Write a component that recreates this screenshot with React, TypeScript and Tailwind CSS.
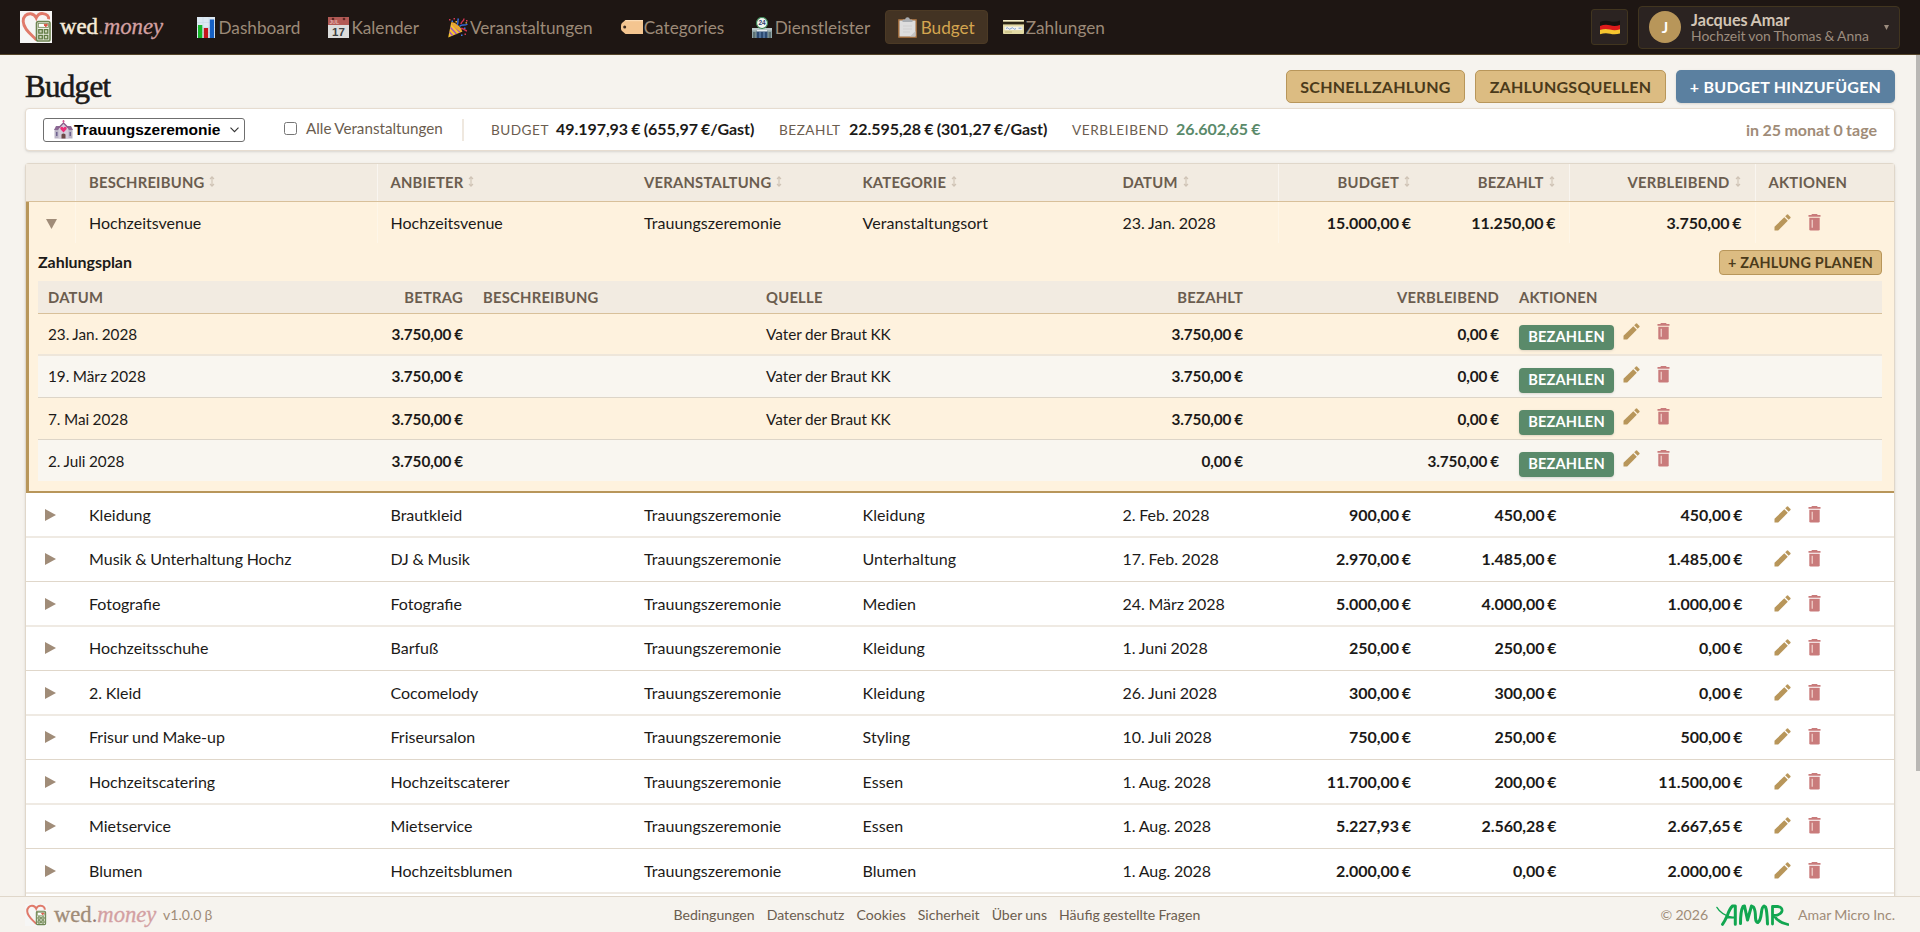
import type { ReactNode } from "react";

/* ---------- drawings ---------- */

function LogoMark({ className }: { className: string }) {
  return (
    <svg className={className} viewBox="0 0 32 32">
      <rect width="32" height="32" fill="#f6f6f5" />
      <path d="M16.5 29C12 24 3.5 18.5 3.2 10.5C3 5.500 6.500 2.500 10.500 2.700C13.500 2.900 15.500 5 16.300 6.800C17.500 4 20 2.300 23 2.600C27 3 29.200 5.500 28.600 8.300" fill="none" stroke="#e07a6a" strokeWidth="2.900" />
      <rect x="16.500" y="10.500" width="13.500" height="19.500" rx="1.800" fill="#eef0e6" stroke="#6d8450" strokeWidth="1.600" />
      <rect x="18.300" y="12.300" width="10" height="4" fill="#fff" stroke="#6d8450" strokeWidth=".8" />
      <path d="M25.800 15.800l-1.700-1.800q0-1.300 1.700-.6q1.700-.7 1.700.6z" fill="#d9513f" stroke="#d9513f" />
      <path d="M18.800 18.700h3.500v3.500h-3.500zM24.300 18.700h3.500v3.500h-3.500zM18.800 24.300h3.500v3.500h-3.500zM24.300 24.300h3.500v3.500h-3.500z" fill="#cdd6ba" stroke="#5f7a42" strokeWidth="1.300" />
    </svg>
  );
}

function ChartIcon() {
  return (
    <svg className="h-[21px] w-[18px]" viewBox="0 0 18 21">
      <rect width="18" height="21" fill="#dde9f3" />
      <path d="M0 5.500h18M0 10.500h18M0 15.500h18M6 0v21M12 0v21" stroke="#c3d5e4" strokeWidth=".5" />
      <rect x="1" y="8" width="4.300" height="13" fill="#16b52a" />
      <rect x="6.800" y="11" width="4.300" height="10" fill="#c5131c" />
      <rect x="12.800" y="2.500" width="4.300" height="18.500" fill="#1660c4" />
    </svg>
  );
}

function CalendarIcon() {
  return (
    <svg className="h-[21px] w-[21px]" viewBox="0 0 21 21">
      <rect width="21" height="21" fill="#dcdcdb" />
      <rect width="21" height="8" fill="#b25a55" />
      <circle cx="5" cy="2" r="1.300" fill="#5c2523" />
      <circle cx="16" cy="2" r="1.300" fill="#5c2523" />
      <text x="1.500" y="7.200" fontSize="5" fontFamily="Liberation Sans, sans-serif" fontWeight="700" fill="#e6b4b0">JUL</text>
      <text x="10.500" y="18.800" textAnchor="middle" fontSize="11.500" fontFamily="Liberation Sans, sans-serif" fontWeight="700" fill="#3f3f3f">17</text>
    </svg>
  );
}

function PartyIcon() {
  return (
    <svg className="h-[21px] w-[21px]" viewBox="0 0 21 21">
      <path d="M1.200 20.500L4.300 5L15.500 14.500z" fill="#f5c331" />
      <path d="M3.500 10.500l6 6.500M2.600 15l3 3.500M5 6.500l8 9" stroke="#9b51c8" strokeWidth="1.300" />
      <ellipse cx="9.800" cy="9.800" rx="2" ry="6.600" transform="rotate(-48 9.800 9.800)" fill="#e8a82f" />
      <path d="M10 8c2-2 0-4 1.500-6.500M12.500 9.500c2.500-3 4.500 0 8-2.500" fill="none" stroke="#3669d6" strokeWidth="1.500" />
      <path d="M14 7c0-3 3-2 3-5.500M14 11.500c2.500-.5 3.500 2 6 2.500" fill="none" stroke="#cf3350" strokeWidth="1.400" />
      <path d="M2 2h1.500v1.500H2zM6.500 1H8v1.500H6.500zM19 3h1.500v1.500H19zM17.500 16.500H19V18h-1.500z" fill="#d23b54" />
      <path d="M4.500 3.500H6V5H4.500zM17 10.500h1.500V12H17zM14 17.500h1.500V19H14z" fill="#3f78dd" />
      <path d="M8.500 4H10v1.500H8.500zM18.500 5.200H20v1.200h-1.500z" fill="#f0b73a" />
    </svg>
  );
}

function LabelIcon() {
  return (
    <svg className="h-[14px] w-[22px]" viewBox="0 0 22 14">
      <path d="M4.500 0H22v14H4.500L1 11Q0 10 0 8.500V5.500Q0 4 1 3z" fill="#f4c590" />
      <path d="M4.500 0H22v1.200H4.500z" fill="#fbdcb5" />
      <circle cx="3.700" cy="7" r="1.500" fill="#3b2a1d" />
    </svg>
  );
}

function StoreIcon() {
  return (
    <svg className="h-[21px] w-[20px]" viewBox="0 0 20 21">
      <rect x="0" y="11" width="20" height="10" fill="#93a7a9" />
      <path d="M0 11h20v2.500H0z" fill="#b9c7c8" />
      <rect x="5" y="13" width="10" height="2" fill="#e8eef0" />
      <rect x="4.500" y="14.500" width="11" height="6.500" fill="#2c4a72" />
      <path d="M8 15v6M12 15v6" stroke="#8ab0d8" strokeWidth=".8" />
      <path d="M1 15h2.500v6H1zM16.500 15H19v6h-2.500z" fill="#5d7275" />
      <circle cx="10" cy="6" r="5.500" fill="#f3f6f3" stroke="#3f8a59" strokeWidth="1.200" />
      <text x="10" y="8.300" textAnchor="middle" fontSize="6.500" fontFamily="Liberation Sans, sans-serif" fontWeight="700" fill="#2d3b6d">24</text>
    </svg>
  );
}

function ClipboardIcon() {
  return (
    <svg className="h-[21px] w-[19px]" viewBox="0 0 19 21">
      <rect x="0" y="2" width="19" height="19" rx="1" fill="#9c6a3c" />
      <rect x="1.500" y="3.500" width="16" height="16" fill="#dedede" />
      <path d="M12 19.500h5.500V14z" fill="#c3c3c3" />
      <path d="M4.500 5V3.200Q4.500 2.500 5.500 2.500H7Q7.500.300 9.500.3T12 2.500h1.500q1 0 1 .7V5z" fill="#a9adb1" />
      <path d="M5 9h9M5 12h9M5 15h7" stroke="#cbcbcb" strokeWidth=".7" />
    </svg>
  );
}

function CardIcon() {
  return (
    <svg className="h-[14px] w-[21px]" viewBox="0 0 21 14">
      <rect width="21" height="14" rx=".8" fill="#e2d9a4" />
      <rect width="21" height="1.500" rx=".7" fill="#f1ecc7" />
      <rect y="1.700" width="21" height="2.700" fill="#2b2516" />
      <rect x="1.500" y="6.500" width="18" height="3.600" fill="#f3f3ee" />
      <path d="M3 8.500q1.500-1.500 2.500 0t2.500 0t2.500 0t2.500 0M15.500 8.200h3" fill="none" stroke="#6f93cc" strokeWidth=".9" />
      <path d="M2 12h7" stroke="#b8ac6e" strokeWidth=".8" />
    </svg>
  );
}

function FlagIcon() {
  return (
    <svg className="h-[15px] w-[20px]" viewBox="0 0 20 15">
      <path d="M0 2q5-2 10-.7T20 .5V5.500q-5 1.800-10 .5T0 6.500z" fill="#17120f" />
      <path d="M0 6q5-2 10-.7T20 5v5q-5 1.500-10 .2T0 10.500z" fill="#dc1a1a" />
      <path d="M0 10q5-1.700 10-.4T20 9.300v4.200q-5 1.500-10 .2T0 14.300z" fill="#f6c52f" />
    </svg>
  );
}

function ChurchIcon() {
  return (
    <svg className="h-[19px] w-[19px]" viewBox="0 0 19 19">
      <rect x=".5" y="9" width="18" height="9.500" fill="#b9b2c4" />
      <path d="M0 10l2-4h5v4zM12 10V6h5l2 4z" fill="#8b6a94" />
      <path d="M4.500 18.500V8L9.500 3l5 5v10.500z" fill="#d4cddb" />
      <path d="M4 8.500L9.500 3l5.500 5.500" fill="none" stroke="#8b5b8a" strokeWidth="1.300" />
      <path d="M9.500 0v3M8.300 1.200h2.400" stroke="#d15b93" strokeWidth="1" />
      <path d="M9.500 12.500L6.300 9Q6 6.500 8 6.700Q9.200 7 9.500 8Q9.800 7 11 6.700Q13 6.500 12.700 9z" fill="#ec2f79" />
      <path d="M7.500 18.500V14.500q2-2 4 0v4z" fill="#6c4a48" />
      <path d="M2 12h1.500v4H2zM15.500 12H17v4h-1.500z" fill="#6f6390" />
    </svg>
  );
}

function PencilIcon() {
  return (
    <svg className="h-[17px] w-[17px]" viewBox="0 0 17 17">
      <path d="M.500 16.500V12.800L10.300 3.200L13.800 6.700L4.200 16.500z" fill="#b8965a" />
      <path d="M11.200 2.300L13.100.500Q13.500.200 13.900.5L16.500 3.100Q16.800 3.500 16.500 3.900L14.700 5.800z" fill="#b8965a" />
    </svg>
  );
}

function TrashIcon() {
  return (
    <svg className="h-[17px] w-[13px]" viewBox="0 0 13 17">
      <path d="M4 0h5l.7 1H12.500v1.800H.500V1h2.800z" fill="#c97b7b" />
      <path d="M1.300 3.800h10.400V15.300Q11.700 16.500 10.400 16.500H2.600Q1.300 16.500 1.300 15.300z" fill="#c97b7b" />
      <path d="M4.200 5.800v8" stroke="#f6dcd6" strokeWidth="1.100" />
    </svg>
  );
}

function AmarLogo() {
  return (
    <svg className="h-[22px] w-[73px]" viewBox="0 0 73 22" fill="none" stroke="#11a650" strokeWidth="3" strokeLinejoin="round" strokeLinecap="round">
      <path d="M1 3.500Q5 10.500 16 13.500" strokeWidth="1.500" />
      <path d="M6.500 20.300Q9 17 11.500 11Q14 4 16.500 2H19.300V20.300" />
      <path d="M11 13.500H19" strokeWidth="2.200" />
      <path d="M24.500 19.500Q24.500 7 27 2.500L28.500 2L31.500 16L35.500 2L37.500 3Q39.500 6 39.500 14Q40 19 42 18.500Q44.500 17 45.500 8Q46 3 48 2L49.500 3Q51 6 51.500 20" />
      <path d="M56.500 20V2.500H61.500Q66.500 3 66 7Q65 11 58 11.500Q62 18.500 72 20.500" strokeWidth="2.800" />
    </svg>
  );
}

/* ---------- data ---------- */

type NavItem = { label: string; icon: ReactNode; box: string; active?: boolean };

const nav: NavItem[] = [
  { label: "Dashboard", icon: <ChartIcon />, box: "w-[21.500px]" },
  { label: "Kalender", icon: <CalendarIcon />, box: "w-[23px]" },
  { label: "Veranstaltungen", icon: <PartyIcon />, box: "w-[23px]" },
  { label: "Categories", icon: <LabelIcon />, box: "w-[23px]" },
  { label: "Dienstleister", icon: <StoreIcon />, box: "w-[22.500px]" },
  { label: "Budget", icon: <ClipboardIcon />, box: "w-[22.500px]", active: true },
  { label: "Zahlungen", icon: <CardIcon />, box: "w-[23px]" },
];

const payments = [
  { date: "23. Jan. 2028", source: "Vater der Braut KK", paid: "3.750,00 €", left: "0,00 €" },
  { date: "19. März 2028", source: "Vater der Braut KK", paid: "3.750,00 €", left: "0,00 €" },
  { date: "7. Mai 2028", source: "Vater der Braut KK", paid: "3.750,00 €", left: "0,00 €" },
  { date: "2. Juli 2028", source: "", paid: "0,00 €", left: "3.750,00 €" },
];

const paymentRowStyles = [
  "h-[42px] border-b-2 border-[#eee6da]",
  "h-[42px] border-b border-[#ddd5c8] bg-[#f9f6f0]",
  "h-[42px] border-b border-[#ddd5c8] pt-px",
  "h-[41px] bg-[#f9f6f0] pt-px",
];

const rows = [
  ["Kleidung", "Brautkleid", "Kleidung", "2. Feb. 2028", "900,00 €", "450,00 €", "450,00 €"],
  ["Musik & Unterhaltung Hochz", "DJ & Musik", "Unterhaltung", "17. Feb. 2028", "2.970,00 €", "1.485,00 €", "1.485,00 €"],
  ["Fotografie", "Fotografie", "Medien", "24. März 2028", "5.000,00 €", "4.000,00 €", "1.000,00 €"],
  ["Hochzeitsschuhe", "Barfuß", "Kleidung", "1. Juni 2028", "250,00 €", "250,00 €", "0,00 €"],
  ["2. Kleid", "Cocomelody", "Kleidung", "26. Juni 2028", "300,00 €", "300,00 €", "0,00 €"],
  ["Frisur und Make-up", "Friseursalon", "Styling", "10. Juli 2028", "750,00 €", "250,00 €", "500,00 €"],
  ["Hochzeitscatering", "Hochzeitscaterer", "Essen", "1. Aug. 2028", "11.700,00 €", "200,00 €", "11.500,00 €"],
  ["Mietservice", "Mietservice", "Essen", "1. Aug. 2028", "5.227,93 €", "2.560,28 €", "2.667,65 €"],
  ["Blumen", "Hochzeitsblumen", "Blumen", "1. Aug. 2028", "2.000,00 €", "0,00 €", "2.000,00 €"],
];

const mainGrid =
  "grid grid-cols-[50px_301.5px_253.5px_218.5px_260px_169px_145.5px_145.5px_186px_1fr]";
const nestedGrid = "grid grid-cols-[200px_234px_283px_296px_211px_257px_1fr]";
const money = "font-bold tracking-[-0.05px] [word-spacing:-0.06em]";

/* ---------- pieces ---------- */

function Wordmark({ wed, className }: { wed: string; className: string }) {
  return (
    <span className={`font-['Liberation_Serif',serif] whitespace-nowrap ${className}`}>
      <span className={wed}>wed</span>
      <span className="text-[#8f7771]">.</span>
      <span className="italic text-[#d3a0a2] [-webkit-text-stroke:0.3px_#d3a0a2]">money</span>
    </span>
  );
}

function Sort() {
  return (
    <svg className="ml-[5px] h-[11px] w-[6px]" viewBox="0 0 6 11" fill="none" stroke="#cfc3b5" strokeWidth="1.100">
      <path d="M3 .800v9.400M1 3L3 .900L5 3M1 8l2 2.100L5 8" />
    </svg>
  );
}

function HeadCell({ children, right, line, sort = true }: { children: ReactNode; right?: boolean; line?: boolean; sort?: boolean }) {
  return (
    <div className={`flex items-center pb-[2px] pl-[13px] ${right ? "justify-end pr-[14px]" : "pr-[13px]"} ${line ? "border-r border-white/50" : ""}`}>
      {children}
      {sort && <Sort />}
    </div>
  );
}

function Cells({ cells, line }: { cells: string[]; line: string }) {
  const [desc, vendor, cat, date, budget, paid, left] = cells;
  return (
    <>
      <div className={`flex items-center px-[13px] ${line}`}>{desc}</div>
      <div className="flex items-center px-[13px]">{vendor}</div>
      <div className="flex items-center px-[13px] tracking-[0.06px]">Trauungszeremonie</div>
      <div className="flex items-center px-[13px] tracking-[0.06px]">{cat}</div>
      <div className={`flex items-center px-[13px] ${line}`}>{date}</div>
      <Amount>{budget}</Amount>
      <Amount line={line}>{paid}</Amount>
      <Amount line={line}>{left}</Amount>
      <div className="flex items-center gap-[17px] pl-[18.500px]">
        <PencilIcon />
        <TrashIcon />
      </div>
    </>
  );
}

function Amount({ children, line = "" }: { children: ReactNode; line?: string }) {
  return <div className={`flex items-center justify-end px-[13px] ${money} ${line}`}>{children}</div>;
}

/* ---------- page ---------- */

export default function App() {
  return (
    <div className="flex h-[932px] w-[1920px] flex-col overflow-hidden bg-[#f6f3ee] font-['Lato',sans-serif] text-base leading-5 text-[#1c1a18] [word-spacing:-0.03em]">
      <header className="flex h-[55px] shrink-0 items-center border-b border-[#54442a] bg-[#1e1613] pl-5 pr-5">
        <LogoMark className="size-8" />
        <Wordmark className="ml-2 w-[124px] text-[22.800px]" wed="text-[#f5ead9] [-webkit-text-stroke:0.5px_#f5ead9]" />
        <nav className="flex items-center gap-[2px]">
          {nav.map((n) => (
            <div
              key={n.label}
              className={`flex h-[34px] items-center rounded-[4px] border px-[12px] text-[17.200px] ${
                n.active ? "border-[#4c3a25] bg-[#433323] text-[#d4a54f]" : "border-transparent text-[#9c8a78]"
              }`}
            >
              <span className={`flex items-center ${n.box}`}>{n.icon}</span>
              <span className="pt-[2px]">{n.label}</span>
            </div>
          ))}
        </nav>
        <div className="ml-auto flex h-9 w-[37px] items-center justify-center rounded-[3px] border border-[#41351f] bg-[#2b2321]">
          <FlagIcon />
        </div>
        <div className="ml-[10px] flex h-[43px] w-[262px] items-center rounded-[4px] border border-[#41351f] bg-[#2b2321] pl-[10px]">
          <div className="flex size-8 items-center justify-center rounded-full bg-[#b8965a] text-[15px] font-bold text-white">J</div>
          <div className="ml-[10px] w-[193px] whitespace-nowrap">
            <div className="text-[16.200px] font-bold leading-[17px] text-[#d2c5b5]">Jacques Amar</div>
            <div className="text-[13.900px] leading-[15px] text-[#9c8c7e]">Hochzeit von Thomas &amp; Anna</div>
          </div>
          <svg className="h-[5px] w-[5px]" viewBox="0 0 5 5"><path d="M0 0h5L2.500 5z" fill="#9c8c7e" /></svg>
        </div>
      </header>

      <div className="flex min-h-0 flex-1">
        <main className="min-w-0 flex-1 overflow-hidden pl-[25px] pr-[21px]">
          <div className="flex h-[53px] items-start justify-between">
            <h1 className="pt-[14px] font-['Liberation_Serif',serif] text-[31px] leading-9 tracking-[-0.7px] [-webkit-text-stroke:0.6px_#1c1a18]">Budget</h1>
            <div className="flex gap-[10px] pt-[15px] text-base font-bold tracking-[0.25px]">
              <button className="h-[33px] w-[179px] rounded-[5px] border border-[#b8965a] bg-[#dcbc82] text-[#4a3a1a]">SCHNELLZAHLUNG</button>
              <button className="h-[33px] w-[191px] rounded-[5px] border border-[#b8965a] bg-[#dcbc82] text-[#4a3a1a]">ZAHLUNGSQUELLEN</button>
              <button className="h-[33px] w-[219px] whitespace-nowrap rounded-[5px] bg-[#5b80a0] text-white shadow-sm">+ BUDGET HINZUFÜGEN</button>
            </div>
          </div>

          <section className="flex h-[43px] items-center rounded-[4px] border border-[#e6dcd0] bg-white pl-[17px] pr-[17px] shadow-sm">
            <div className="flex h-6 w-[202px] items-center rounded-[3px] border border-[#6f6f6f] pl-[10px] font-['Liberation_Sans',sans-serif] text-[15.500px] font-bold text-black">
              <ChurchIcon />
              <span className="ml-px">Trauungszeremonie</span>
              <svg className="ml-[10px] h-[6px] w-[9px]" viewBox="0 0 9 6" fill="none" stroke="#333" strokeWidth="1.100"><path d="M.5.700l4 4l4-4" /></svg>
            </div>
            <div className="mb-[2px] ml-[39px] size-[13px] rounded-[2.500px] border border-[#767676] bg-white" />
            <span className="ml-[9px] w-[156px] whitespace-nowrap pb-[3px] text-[15.200px] text-[#6b5d4f]">Alle Veranstaltungen</span>
            <div className="h-[22px] w-[2px] bg-[#efe8df]" />
            <div className="ml-[27px] flex items-baseline whitespace-nowrap pb-px font-bold tracking-[-0.05px] [word-spacing:-0.04em]">
              <span className="w-[65px] text-[13.600px] font-normal tracking-[0.500px] text-[#6b5d4f]">BUDGET</span>
              <span className="w-[223px]">49.197,93 € (655,97 €/Gast)</span>
              <span className="w-[70px] text-[13.600px] font-normal tracking-[0.500px] text-[#6b5d4f]">BEZAHLT</span>
              <span className="w-[223px]">22.595,28 € (301,27 €/Gast)</span>
              <span className="w-[104px] text-[13.600px] font-normal tracking-[0.600px] text-[#6b5d4f]">VERBLEIBEND</span>
              <span className="text-[#5a8a6a]">26.602,65 €</span>
            </div>
            <span className="ml-auto pt-px font-bold text-[#a08c78]">in 25 monat 0 tage</span>
          </section>

          <section className="mt-3 rounded-t-[4px] border border-b-0 border-[#e0d7ca] bg-white shadow-sm">
            <div className={`${mainGrid} h-[38px] border-b border-[#d8c09a] bg-[#f2ebe1] text-[14.800px] font-bold tracking-[0.220px] text-[#6b5d4f]`}>
              <div className="border-r border-white/50" />
              <HeadCell line>BESCHREIBUNG</HeadCell>
              <HeadCell>ANBIETER</HeadCell>
              <HeadCell>VERANSTALTUNG</HeadCell>
              <HeadCell>KATEGORIE</HeadCell>
              <HeadCell line>DATUM</HeadCell>
              <HeadCell right>BUDGET</HeadCell>
              <HeadCell right line>BEZAHLT</HeadCell>
              <HeadCell right line>VERBLEIBEND</HeadCell>
              <HeadCell sort={false}>AKTIONEN</HeadCell>
            </div>

            <div className="h-[291px] border-b-2 border-[#b8965a] bg-[#fef2de] shadow-[inset_3px_0_0_#b8965a]">
              <div className={`${mainGrid} h-[43px] pb-[2px]`}>
                <div className="flex items-center border-r border-white/30 pl-[19.500px] pt-[2px]">
                  <svg className="h-[10px] w-[11px]" viewBox="0 0 11 10"><path d="M0 0h11L5.500 10z" fill="#a08c78" /></svg>
                </div>
                <Cells
                  line="border-r border-white/30"
                  cells={["Hochzeitsvenue", "Hochzeitsvenue", "Veranstaltungsort", "23. Jan. 2028", "15.000,00 €", "11.250,00 €", "3.750,00 €"]}
                />
              </div>
              <div className="px-3 pt-[5px] text-[15.300px]">
                <div className="flex h-[25px] items-center justify-between">
                  <span className="pb-[2px] text-base font-bold tracking-[-0.05px]">Zahlungsplan</span>
                  <button className="h-[25px] w-[163px] whitespace-nowrap rounded-[4px] border border-[#b8965a] bg-[#dcbc82] pt-px text-[14.400px] font-bold leading-none tracking-[0.220px] text-[#4a3a1a]">+ ZAHLUNG PLANEN</button>
                </div>
                <div className={`${nestedGrid} mt-[6px] h-[33px] items-center border-b border-[#d8c09a] bg-[#f2ebe1] pb-px text-[14.800px] font-bold tracking-[0.220px] text-[#6b5d4f]`}>
                  <div className="pl-[10px]">DATUM</div>
                  <div className="pr-[9px] text-right">BETRAG</div>
                  <div className="pl-[11px]">BESCHREIBUNG</div>
                  <div className="pl-[11px]">QUELLE</div>
                  <div className="pr-[19px] text-right">BEZAHLT</div>
                  <div className="pr-[20px] text-right">VERBLEIBEND</div>
                  <div>AKTIONEN</div>
                </div>
                {payments.map((p, i) => (
                  <div key={p.date} className={`${nestedGrid} items-center ${paymentRowStyles[i]}`}>
                    <div className="pb-px pl-[10px]">{p.date}</div>
                    <div className={`pb-px pr-[9px] text-right ${money}`}>3.750,00 €</div>
                    <div />
                    <div className="pb-px pl-[11px]">{p.source}</div>
                    <div className={`pb-px pr-[19px] text-right ${money}`}>{p.paid}</div>
                    <div className={`pb-px pr-[20px] text-right ${money}`}>{p.left}</div>
                    <div className="-mt-px flex items-start">
                      <button className="mt-[8px] h-[25px] w-[95px] rounded-[4px] bg-[#5a8a6a] text-[14.600px] font-bold leading-none tracking-[0.150px] text-white shadow-sm">BEZAHLEN</button>
                      <span className="ml-[9px] mt-[6px]"><PencilIcon /></span>
                      <span className="ml-[17px] mt-[6px]"><TrashIcon /></span>
                    </div>
                  </div>
                ))}
              </div>
            </div>

            {rows.map((r, i) => (
              <div
                key={r[0]}
                className={`${mainGrid} ${i % 2 === 0 ? "h-[45px] border-b-2 border-[#efeae3]" : "h-[44px] border-b border-[#e0d7ca] pb-[2px]"}`}
              >
                <div className="flex items-center pl-[19px] pt-px">
                  <svg className="h-3 w-[11px]" viewBox="0 0 11 12"><path d="M0 0L11 6L0 12z" fill="#a08c78" /></svg>
                </div>
                <Cells cells={r} line="" />
              </div>
            ))}
            <div className="h-[45px]" />
          </section>
        </main>
        <div className="w-1 shrink-0 bg-[#f6f3ee]">
          <div className="h-[716px] bg-[#b9b7b4]" />
        </div>
      </div>

      <footer className="flex h-9 shrink-0 items-center border-t border-[#e0d7ca] bg-[#f6f3ee] pl-[25px] pr-[25px] text-[14.100px] text-[#6b5d4f]">
        <LogoMark className="h-[22px] w-[22px]" />
        <Wordmark className="ml-[7px] w-[109px] text-[22.600px]" wed="text-[#a08c78] [-webkit-text-stroke:0.3px_#a08c78]" />
        <span className="w-[510.500px] text-[#a08c78]">v1.0.0 β</span>
        <div className="flex gap-3">
          {["Bedingungen", "Datenschutz", "Cookies", "Sicherheit", "Über uns", "Häufig gestellte Fragen"].map((l) => (
            <span key={l}>{l}</span>
          ))}
        </div>
        <div className="ml-auto flex items-center text-[#a08c78]">
          <span className="mr-2">© 2026</span>
          <AmarLogo />
          <span className="ml-[9px]">Amar Micro Inc.</span>
        </div>
      </footer>
    </div>
  );
}
